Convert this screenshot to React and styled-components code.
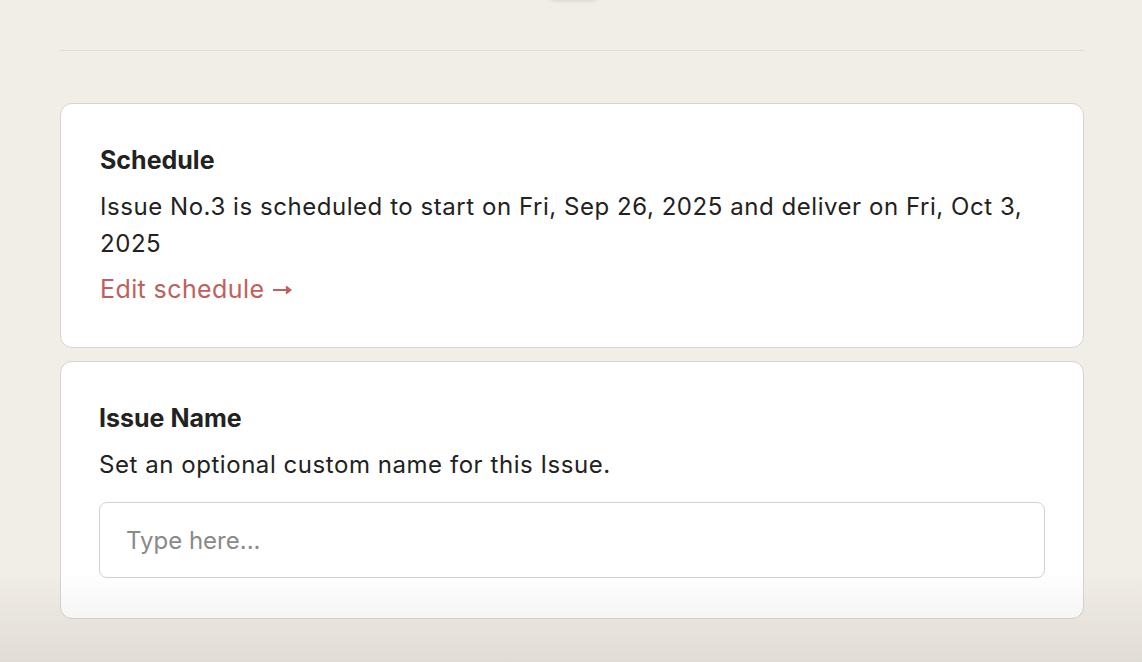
import styled, { createGlobalStyle } from "styled-components";

const GlobalStyle = createGlobalStyle`
  html, body {
    margin: 0;
    padding: 0;
    background: #f1ede7;
    font-family: "Inter", "Liberation Sans", sans-serif;
    color: #222;
    overflow: hidden;
  }
  * { box-sizing: border-box; }
`;

const Page = styled.div`
  position: relative;
  width: 1142px;
  height: 662px;
  padding: 50px 58px 0 60px;
`;

const TopShadow = styled.div`
  position: absolute;
  top: -40px;
  left: 546px;
  width: 54px;
  height: 40px;
  border-radius: 10px;
  box-shadow: 0 1px 4px rgba(0, 0, 0, 0.12);
`;

const Divider = styled.hr`
  margin: 0;
  border: none;
  border-top: 1px solid #e0dcd8;
`;

const Stack = styled.div`
  display: flex;
  flex-direction: column;
  gap: 13px;
  margin-top: 52px;
`;

const Card = styled.section`
  background: #fff;
  border: 1px solid #d7d4d1;
  border-radius: 12px;
  padding: ${(p) => p.$pad || "40px 39px"};
`;

const Title = styled.h3`
  margin: 0;
  font-size: 25px;
  font-weight: 700;
  line-height: 32px;
  color: #222;
`;

const Text = styled.p`
  margin: 12px 0 0;
  font-size: 24px;
  line-height: 37px;
  letter-spacing: 0.55px;
  color: #222;
`;

const Link = styled.a`
  display: inline-flex;
  align-items: center;
  gap: 8px;
  margin-top: 9px;
  font-size: 25px;
  line-height: 36px;
  letter-spacing: 0.4px;
  color: #c0605c;
  text-decoration: none;
  cursor: pointer;
`;

const Arrow = styled.svg`
  width: 20px;
  height: 12px;
  margin-top: 2px;
`;

const Input = styled.input`
  display: block;
  width: 100%;
  height: 76px;
  margin-top: 19px;
  padding: 0 26px;
  border: 1px solid #d4d2d0;
  border-radius: 8px;
  font-family: inherit;
  font-size: 24px;
  color: #222;
  outline: none;
  &::placeholder { color: #8a8a8a; }
`;

const BottomFade = styled.div`
  position: fixed;
  left: 0;
  right: 0;
  bottom: 0;
  height: 90px;
  pointer-events: none;
  background: linear-gradient(to bottom, rgba(120, 110, 100, 0), rgba(120, 110, 100, 0.13));
`;

export default function App() {
  return (
    <>
      <GlobalStyle />
      <Page>
        <TopShadow />
        <Divider />
        <Stack>
          <Card>
            <Title>Schedule</Title>
            <Text>
              Issue No.3 is scheduled to start on Fri, Sep 26, 2025 and deliver on Fri, Oct 3, 2025
            </Text>
            <Link>
              Edit schedule
              <Arrow viewBox="0 0 20 12" fill="none" stroke="currentColor" strokeWidth="2">
                <path d="M1 6H18" />
                <path d="M14 2.5L18.5 6L14 9.5" fill="currentColor" strokeLinejoin="miter" />
              </Arrow>
            </Link>
          </Card>
          <Card $pad="40px 38px 40px 38px">
            <Title>Issue Name</Title>
            <Text>Set an optional custom name for this Issue.</Text>
            <Input placeholder="Type here..." />
          </Card>
        </Stack>
        <BottomFade />
      </Page>
    </>
  );
}
